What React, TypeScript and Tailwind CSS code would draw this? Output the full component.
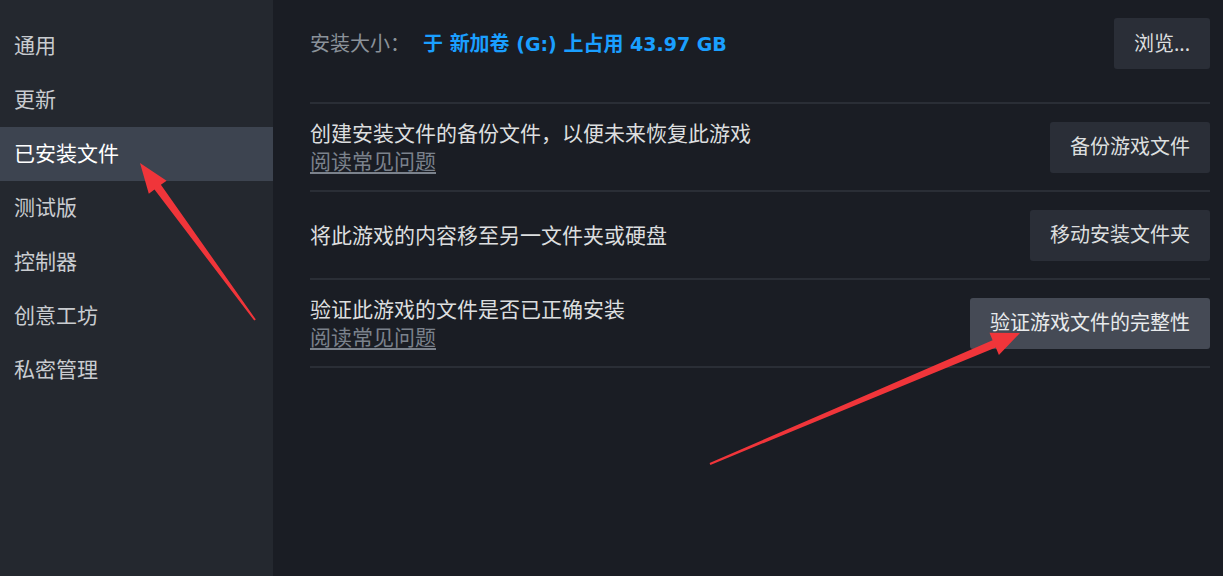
import React from "react";

const sideItems = ["通用", "更新", "已安装文件", "测试版", "控制器", "创意工坊", "私密管理"];

const font = { fontFamily: '"Noto Sans", "Noto Sans CJK SC", sans-serif' };
const latin = { fontFamily: '"DejaVu Sans", "Noto Sans CJK SC", sans-serif' };

const Btn: React.FC<{ label: string; active?: boolean }> = ({ label, active }) => (
  <button
    className={
      active
        ? "h-[51px] px-[20px] rounded-[3px] bg-[#454a55] text-[20px] text-[#e8eaec] shrink-0"
        : "h-[51px] px-[20px] rounded-[3px] bg-[#2a2e37] text-[20px] text-[#dcdedf] shrink-0"
    }
  >
    {label}
  </button>
);

const Row: React.FC<{ text: string; faq?: boolean; button: string; active?: boolean }> = ({
  text,
  faq,
  button,
  active,
}) => (
  <div className="h-[88px] flex items-center justify-between border-b-2 border-[#2a2e36]">
    <div className="flex flex-col text-[21px] leading-[28px]">
      <span className="text-[#dcdedf]">{text}</span>
      {faq && <span className="text-[#7b828c] underline underline-offset-[3px]">阅读常见问题</span>}
    </div>
    <Btn label={button} active={active} />
  </div>
);

// red annotation arrow, tip first
const Arrow: React.FC<{ points: string }> = ({ points }) => (
  <polygon points={points} fill="#f0353a" />
);

const App: React.FC = () => {
  return (
    <div className="relative flex w-[1223px] h-[576px] bg-[#1a1d24] overflow-hidden" style={font}>
      <aside className="w-[273px] shrink-0 bg-[#24282f] pt-[19px]">
        {sideItems.map((item) => (
          <div
            key={item}
            className={
              item === "已安装文件"
                ? "h-[54px] flex items-center pl-[14px] text-[21px] text-white bg-[#3d4450]"
                : "h-[54px] flex items-center pl-[14px] text-[21px] text-[#c9ccd0]"
            }
          >
            {item}
          </div>
        ))}
      </aside>

      <main className="flex-1 pl-[37px] pr-[13px]">
        <div className="h-[104px] flex items-start justify-between pt-[18px] border-b-2 border-[#2a2e36]">
          <div className="h-[51px] flex items-center text-[20px]">
            <span className="text-[#8b929a]">安装大小：</span>
            <span className="ml-[13px] text-[#1a9fff] font-semibold">
              于<span className="text-[19px]" style={latin}> </span>新加卷
              <span className="text-[19px]" style={latin}> (G:) </span>上占用
              <span className="text-[19px]" style={latin}> 43.97 GB</span>
            </span>
          </div>
          <Btn label="浏览..." />
        </div>
        <Row text="创建安装文件的备份文件，以便未来恢复此游戏" faq button="备份游戏文件" />
        <Row text="将此游戏的内容移至另一文件夹或硬盘" button="移动安装文件夹" />
        <Row text="验证此游戏的文件是否已正确安装" faq button="验证游戏文件的完整性" active />
      </main>

      <svg className="absolute inset-0 pointer-events-none" width="1223" height="576">
        <Arrow points="140,163 166.6,180.7 160.9,184.8 255.8,319.4 254.2,320.6 154.5,189.6 148.8,193.7" />
        <Arrow points="1020,333 998.9,355 995.8,347.6 710.4,464.9 709.6,463.1 992.6,340.2 989.5,332.8" />
      </svg>
    </div>
  );
};

export default App;
